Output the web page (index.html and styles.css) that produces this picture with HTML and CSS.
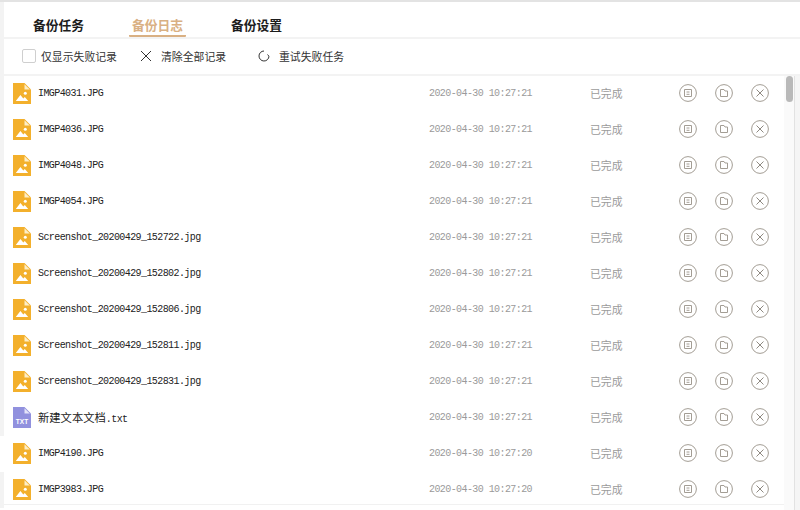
FILE: index.html
```html
<!DOCTYPE html>
<html lang="zh-CN">
<head>
<meta charset="utf-8">
<title>备份日志</title>
<link rel="stylesheet" href="styles.css">
</head>
<body>
<svg class="defs" width="0" height="0" aria-hidden="true">
  <defs>
    <symbol id="img" viewBox="0 0 18 21">
      <path d="M0 0H11.5L18 6.5V21H0Z" fill="#f3b02c"/>
      <path d="M11.5 1.2L16.8 6.5H11.5Z" fill="#fdeec8"/>
      <circle cx="12.3" cy="10.3" r="1.5" fill="#fff"/>
      <path d="M2.8 18L7.4 12L10.3 15.4L11.8 14L15.2 18Z" fill="#fff"/>
    </symbol>
    <symbol id="txt" viewBox="0 0 18 21">
      <path d="M0 0H11.5L18 6.5V21H0Z" fill="#9191de"/>
      <path d="M11.5 1.2L16.8 6.5H11.5Z" fill="#e4e4f8"/>
    </symbol>
    <symbol id="a-view" viewBox="0 0 18 18">
      <circle cx="9" cy="9" r="8.4" fill="none" stroke="#a39d94"/>
      <path d="M5.5 5.5H12.5V12.5H5.5ZM7.5 8H10.5M7.5 10.3H10.5" fill="none" stroke="#a39d94"/>
    </symbol>
    <symbol id="a-folder" viewBox="0 0 18 18">
      <circle cx="9" cy="9" r="8.4" fill="none" stroke="#a39d94"/>
      <path d="M5.5 5.5H9L10 7H12.5V12.5H5.5Z" fill="none" stroke="#a39d94"/>
    </symbol>
    <symbol id="a-del" viewBox="0 0 18 18">
      <circle cx="9" cy="9" r="8.4" fill="none" stroke="#a39d94"/>
      <path d="M5.5 5.5L12.5 12.5M12.5 5.5L5.5 12.5" fill="none" stroke="#8f8a82"/>
    </symbol>
  </defs>
</svg>
<div class="app">
  <nav class="tabs">
    <span class="tab">备份任务</span>
    <span class="tab active">备份日志</span>
    <span class="tab">备份设置</span>
  </nav>
  <div class="toolbar">
    <label class="tool check"><span class="box"></span>仅显示失败记录</label>
    <span class="tool clear">
      <svg class="tool-ico" width="12" height="12" viewBox="0 0 12 12"><path d="M1 1L11 11M11 1L1 11" fill="none" stroke="#333"/></svg>清除全部记录
    </span>
    <span class="tool retry">
      <svg class="tool-ico" width="12" height="12" viewBox="0 0 12 12"><path d="M6 1A5 5 0 1 0 11 6.2M11 6.2L9.4 4.6" fill="none" stroke="#333"/></svg>重试失败任务
    </span>
  </div>
  <div class="list-wrap">
    <ul class="list">
      <li class="row"><svg class="file"><use href="#img"/></svg><span class="name">IMGP4031.JPG</span><span class="time">2020-04-30 10:27:21</span><span class="status">已完成</span><span class="acts"><svg class="act"><use href="#a-view"/></svg><svg class="act"><use href="#a-folder"/></svg><svg class="act"><use href="#a-del"/></svg></span></li>
      <li class="row"><svg class="file"><use href="#img"/></svg><span class="name">IMGP4036.JPG</span><span class="time">2020-04-30 10:27:21</span><span class="status">已完成</span><span class="acts"><svg class="act"><use href="#a-view"/></svg><svg class="act"><use href="#a-folder"/></svg><svg class="act"><use href="#a-del"/></svg></span></li>
      <li class="row"><svg class="file"><use href="#img"/></svg><span class="name">IMGP4048.JPG</span><span class="time">2020-04-30 10:27:21</span><span class="status">已完成</span><span class="acts"><svg class="act"><use href="#a-view"/></svg><svg class="act"><use href="#a-folder"/></svg><svg class="act"><use href="#a-del"/></svg></span></li>
      <li class="row"><svg class="file"><use href="#img"/></svg><span class="name">IMGP4054.JPG</span><span class="time">2020-04-30 10:27:21</span><span class="status">已完成</span><span class="acts"><svg class="act"><use href="#a-view"/></svg><svg class="act"><use href="#a-folder"/></svg><svg class="act"><use href="#a-del"/></svg></span></li>
      <li class="row"><svg class="file"><use href="#img"/></svg><span class="name">Screenshot_20200429_152722.jpg</span><span class="time">2020-04-30 10:27:21</span><span class="status">已完成</span><span class="acts"><svg class="act"><use href="#a-view"/></svg><svg class="act"><use href="#a-folder"/></svg><svg class="act"><use href="#a-del"/></svg></span></li>
      <li class="row"><svg class="file"><use href="#img"/></svg><span class="name">Screenshot_20200429_152802.jpg</span><span class="time">2020-04-30 10:27:21</span><span class="status">已完成</span><span class="acts"><svg class="act"><use href="#a-view"/></svg><svg class="act"><use href="#a-folder"/></svg><svg class="act"><use href="#a-del"/></svg></span></li>
      <li class="row"><svg class="file"><use href="#img"/></svg><span class="name">Screenshot_20200429_152806.jpg</span><span class="time">2020-04-30 10:27:21</span><span class="status">已完成</span><span class="acts"><svg class="act"><use href="#a-view"/></svg><svg class="act"><use href="#a-folder"/></svg><svg class="act"><use href="#a-del"/></svg></span></li>
      <li class="row"><svg class="file"><use href="#img"/></svg><span class="name">Screenshot_20200429_152811.jpg</span><span class="time">2020-04-30 10:27:21</span><span class="status">已完成</span><span class="acts"><svg class="act"><use href="#a-view"/></svg><svg class="act"><use href="#a-folder"/></svg><svg class="act"><use href="#a-del"/></svg></span></li>
      <li class="row"><svg class="file"><use href="#img"/></svg><span class="name">Screenshot_20200429_152831.jpg</span><span class="time">2020-04-30 10:27:21</span><span class="status">已完成</span><span class="acts"><svg class="act"><use href="#a-view"/></svg><svg class="act"><use href="#a-folder"/></svg><svg class="act"><use href="#a-del"/></svg></span></li>
      <li class="row"><span class="file-wrap"><svg class="file"><use href="#txt"/></svg><span class="txt-label">TXT</span></span><span class="name"><span class="cjk">新建文本文档</span>.txt</span><span class="time">2020-04-30 10:27:21</span><span class="status">已完成</span><span class="acts"><svg class="act"><use href="#a-view"/></svg><svg class="act"><use href="#a-folder"/></svg><svg class="act"><use href="#a-del"/></svg></span></li>
      <li class="row flush"><svg class="file"><use href="#img"/></svg><span class="name">IMGP4190.JPG</span><span class="time">2020-04-30 10:27:20</span><span class="status">已完成</span><span class="acts"><svg class="act"><use href="#a-view"/></svg><svg class="act"><use href="#a-folder"/></svg><svg class="act"><use href="#a-del"/></svg></span></li>
      <li class="row"><svg class="file"><use href="#img"/></svg><span class="name">IMGP3983.JPG</span><span class="time">2020-04-30 10:27:20</span><span class="status">已完成</span><span class="acts"><svg class="act"><use href="#a-view"/></svg><svg class="act"><use href="#a-folder"/></svg><svg class="act"><use href="#a-del"/></svg></span></li>
    </ul>
    <div class="scrollbar"><div class="thumb"></div></div>
  </div>
</div>
</body>
</html>
```
FILE: styles.css
```css
* { box-sizing: border-box; }
html, body { margin: 0; height: 100%; overflow: hidden; background: #fff; }
body { font-family: "Noto Sans CJK SC", "Liberation Sans", sans-serif; }
.defs { position: absolute; }
.app {
  width: 800px;
  height: 510px;
  border-top: 2px solid #e3e3e3;
  background: #fff;
  display: flex;
  flex-direction: column;
}
.tabs {
  height: 37px;
  display: flex;
  align-items: flex-start;
  padding-left: 26px;
  border-left: 4px solid #f3f3f3;
  border-bottom: 2px solid #f3f3f3;
  background: #fff;
}
.tab {
  height: 35px;
  line-height: 45px;
  font-size: 12.75px;
  font-weight: 700;
  color: #1c1c1c;
  margin-right: 42px;
  padding: 0 3px;
  white-space: nowrap;
}
.tab.active {
  color: #d9b083;
  border-bottom: 2px solid #d9b083;
  border-radius: 0 0 1px 1px;
}
.toolbar {
  height: 37px;
  display: flex;
  align-items: center;
  padding: 0 0 1px 18px;
  border-left: 4px solid #f3f3f3;
  border-bottom: 2px solid #f3f3f3;
  font-size: 10.85px;
  color: #333;
  background: #fff;
}
.tool { display: flex; align-items: center; white-space: nowrap; }
.box {
  width: 14px;
  height: 14px;
  border: 1px solid #cfcfcf;
  border-radius: 2px;
  margin-right: 5px;
  background: #fff;
}
.check { width: 118px; }
.clear { width: 118px; }
.tool-ico { margin-right: 9px; flex: none; }
.list-wrap {
  flex: 1;
  min-height: 0;
  display: flex;
  overflow: hidden;
  background: #fff;
  position: relative;
}
.list-wrap::after {
  content: "";
  position: absolute;
  left: 4px;
  right: 16px;
  bottom: 5px;
  height: 1px;
  background: #f1f1f1;
}
.list {
  flex: 1;
  list-style: none;
  margin: 0;
  padding: 0;
  overflow: hidden;
}
.row {
  height: 36px;
  display: flex;
  align-items: center;
  padding: 0 0 2px 9px;
  border-left: 4px solid #f3f3f3;
  background: #fff;
}
.row.flush { border-left-color: #fff; }
.file { width: 18px; height: 21px; flex: none; display: block; }
.file-wrap { position: relative; width: 18px; height: 21px; flex: none; }
.txt-label {
  position: absolute;
  left: 0;
  right: 0;
  bottom: 2px;
  text-align: center;
  font: 700 6.5px/8px "Liberation Sans", sans-serif;
  color: #fff;
}
.name {
  width: 391px;
  margin-left: 7px;
  padding-top: 2px;
  font-family: "Liberation Mono", "Noto Sans CJK SC", monospace;
  font-size: 10px;
  letter-spacing: -0.58px;
  line-height: 14px;
  color: #222;
  white-space: nowrap;
}
.cjk { font-family: "Noto Sans CJK SC", sans-serif; font-size: 11.3px; letter-spacing: 0; }
.time {
  width: 161px;
  padding-top: 2px;
  font-family: "Liberation Mono", monospace;
  font-size: 10px;
  letter-spacing: -0.58px;
  line-height: 14px;
  color: #9a9a9a;
  white-space: nowrap;
}
.status {
  width: 89px;
  font-size: 10.85px;
  line-height: 14px;
  color: #9b9b9b;
}
.acts { display: flex; gap: 18px; flex: none; }
.act { width: 18px; height: 18px; display: block; }
.scrollbar {
  width: 16px;
  flex: none;
  background: #fafafa;
  border-right: 5px solid #f5f5f5;
  position: relative;
}
.scrollbar::after {
  content: "";
  position: absolute;
  right: 0;
  top: 0;
  bottom: 0;
  width: 1px;
  background: #e2e2e2;
}
.thumb {
  position: absolute;
  left: 2px;
  top: 0;
  width: 7px;
  height: 26px;
  background: #b9b9b9;
  border-radius: 4px;
}
```
